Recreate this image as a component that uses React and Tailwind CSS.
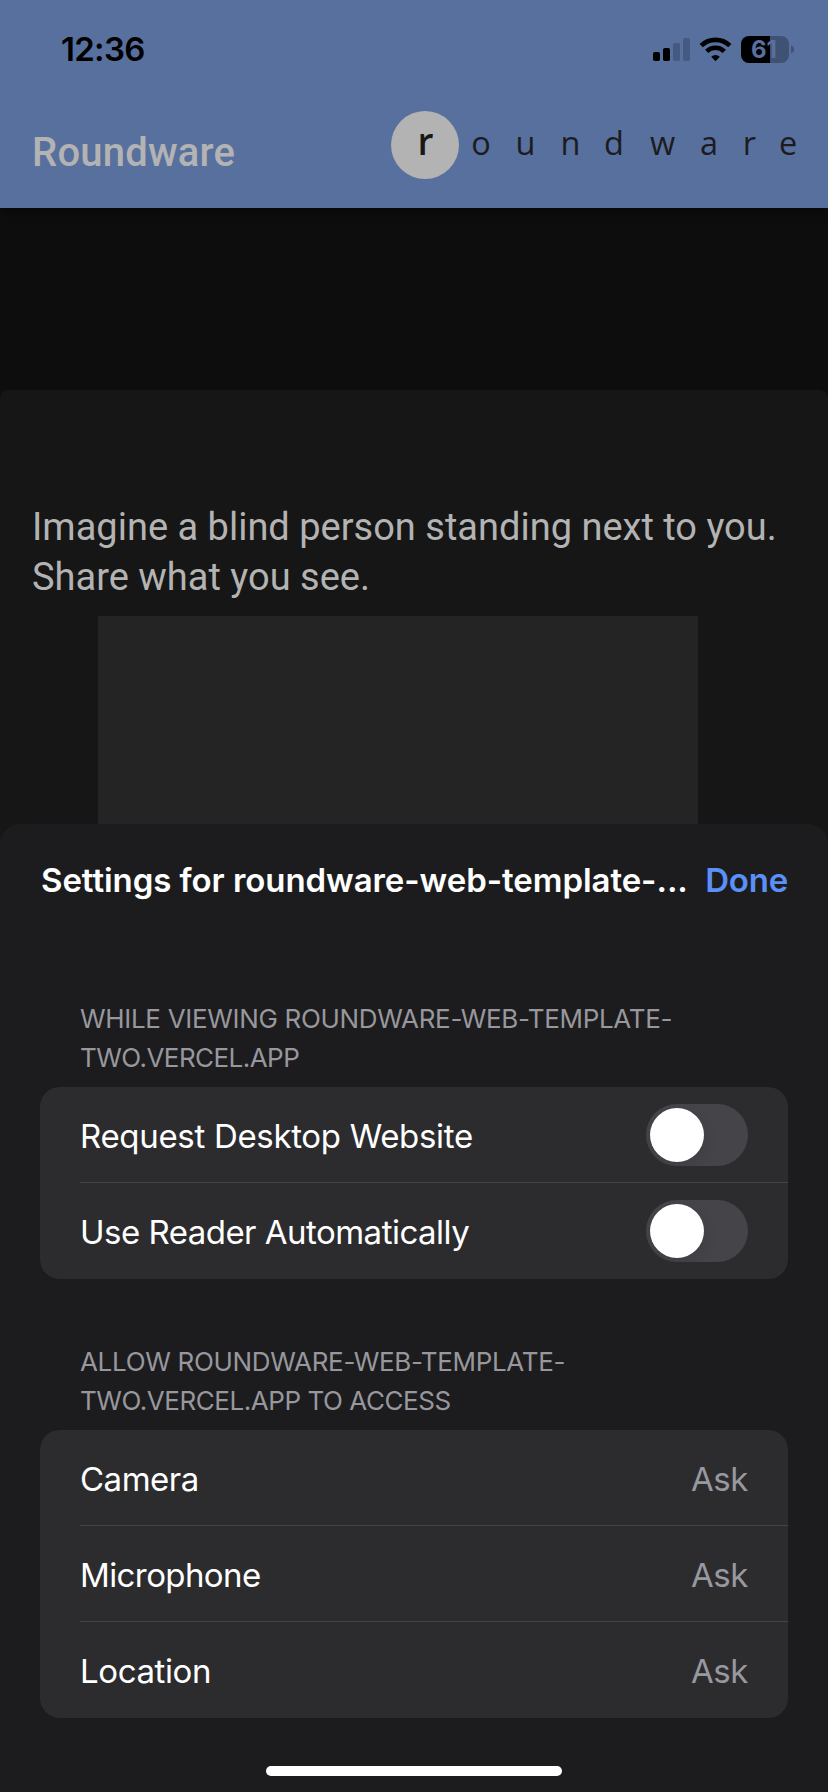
import React from "react";

function StatusIcons() {
  return (
    <svg width="142" height="30" viewBox="652 35 142 30" aria-hidden="true">
      <rect x="653" y="52" width="7" height="9" rx="1.8" fill="#000" />
      <rect x="663" y="48" width="7" height="13" rx="1.8" fill="#000" />
      <rect x="673" y="43" width="7" height="18" rx="1.8" fill="#455a80" />
      <rect x="683" y="38" width="7" height="23" rx="1.8" fill="#455a80" />
      <g fill="none" stroke="#000" strokeWidth="4.6">
        <path d="M701.2 45.6a20.6 20.6 0 0 1 28.6 0" />
        <path d="M706.7 51.4a12.6 12.6 0 0 1 17.6 0" />
      </g>
      <path d="M715.5 61.2l-4.3-4.5a6.4 6.4 0 0 1 8.6 0z" fill="#000" />
      <path d="M749 36h21v27h-21a8 8 0 0 1-8-8V44a8 8 0 0 1 8-8z" fill="#000" />
      <path d="M770 36h11a8 8 0 0 1 8 8v11a8 8 0 0 1-8 8h-11z" fill="#405274" />
      <path d="M791 45.5c2 .6 3 2.2 3 4s-1 3.400-3 4z" fill="#405274" />
      <text x="764" y="58" textAnchor="middle" fontSize="24" fill="#58709e" className="font-['Inter',sans-serif] font-bold">61</text>
    </svg>
  );
}

function Logo() {
  return (
    <svg width="412" height="68" viewBox="391 111 412 68" role="img">
      <circle cx="425" cy="145" r="34" fill="#b3b3b3" />
      <text y="155" x="425.5" textAnchor="middle" fontSize="37" fill="#181818" className="font-['Open_Sans',sans-serif] font-semibold">r</text>
      <text
        y="155"
        x="481 525.500 570.500 614 662.500 709 749.500 788"
        textAnchor="middle"
        fontSize="32.5"
        fill="#1c1c1e"
        className="font-['Open_Sans',sans-serif]"
      >
        oundware
      </text>
    </svg>
  );
}

function Toggle() {
  return (
    <span className="flex h-[62px] w-[102px] items-center overflow-hidden rounded-full bg-[#454449] p-1">
      <span className="size-[54px] rounded-full bg-white shadow-[0_6px_16px_rgba(0,0,0,0.09)]" />
    </span>
  );
}

function Row({ label, spacing, first, children }) {
  return (
    <div className="relative flex h-24 items-center justify-between px-10">
      {!first && <span className="absolute -top-px right-0 left-10 h-px bg-[#444446]" />}
      <span className={`pt-[3px] text-[33px] text-white ${spacing}`}>{label}</span>
      {children}
    </div>
  );
}

function Ask() {
  return <span className="pt-[3px] text-[33px] tracking-[-0.4px] text-[#98989f]">Ask</span>;
}

export default function App() {
  return (
    <div className="flex h-[1792px] w-[828px] flex-col overflow-hidden bg-[#0d0d0d] font-['Inter',sans-serif]">
      <header className="z-10 h-[208px] shrink-0 bg-[#58709e] shadow-[0_4px_10px_rgba(0,0,0,0.4)]">
        <div className="flex h-[99px] items-center justify-between pr-[34px] pl-[61px]">
          <span className="pt-px text-[33px] font-semibold tracking-[-0.7px] text-black">12:36</span>
          <StatusIcons />
        </div>
        <div className="flex items-start justify-between pt-3 pr-[25px] pl-8">
          <h1 className="mt-[18px] font-['Roboto',sans-serif] text-[40px] leading-[47px] font-medium tracking-[0.2px] text-[#b3b3b3]">Roundware</h1>
          <Logo />
        </div>
      </header>

      <main className="mt-[182px] h-[434px] shrink-0 rounded-t-lg bg-[#161616] pt-[112px]">
        <p className="pl-8 font-['Roboto',sans-serif] text-[38px] leading-[50px] text-[#b3b3b3]">
          Imagine a blind person standing next to you.
          <br />
          Share what you see.
        </p>
        <div className="mt-[14px] ml-[98px] h-[208px] w-[600px] bg-[#242424]" />
      </main>

      <section className="z-10 flex grow flex-col bg-[#161616]">
        <div className="flex grow flex-col rounded-t-[20px] bg-[#1c1c1e] px-10">
          <div className="flex h-[112px] items-center justify-between pt-[2px]">
            <h2 className="pl-px text-[33px] font-semibold tracking-[-0.06px] whitespace-nowrap text-white">Settings for roundware-web-template-...</h2>
            <span className="text-[33px] font-semibold tracking-[-0.2px] text-[#5a90f7]">Done</span>
          </div>

          <div className="mt-[63px] pl-10 text-[26px] leading-[39px] text-[#98979d]">
            <p className="tracking-[-0.32px]">WHILE VIEWING ROUNDWARE-WEB-TEMPLATE-</p>
            <p className="tracking-[-0.55px]">TWO.VERCEL.APP</p>
          </div>
          <div className="mt-[10px] rounded-[20px] bg-[#2c2c2e]">
            <Row label="Request Desktop Website" spacing="tracking-[-0.32px]" first>
              <Toggle />
            </Row>
            <Row label="Use Reader Automatically" spacing="tracking-[-0.52px]">
              <Toggle />
            </Row>
          </div>

          <div className="mt-[63px] pl-10 text-[26px] leading-[39px] text-[#98979d]">
            <p className="tracking-[-0.32px]">ALLOW ROUNDWARE-WEB-TEMPLATE-</p>
            <p className="tracking-[-0.45px]">TWO.VERCEL.APP TO ACCESS</p>
          </div>
          <div className="mt-[10px] rounded-[20px] bg-[#2c2c2e]">
            <Row label="Camera" spacing="tracking-[-0.5px]" first>
              <Ask />
            </Row>
            <Row label="Microphone" spacing="tracking-[-0.6px]">
              <Ask />
            </Row>
            <Row label="Location" spacing="tracking-[-0.4px]">
              <Ask />
            </Row>
          </div>

          <div className="mt-12 h-[10px] w-[296px] self-center rounded-full bg-white" />
        </div>
      </section>
    </div>
  );
}
